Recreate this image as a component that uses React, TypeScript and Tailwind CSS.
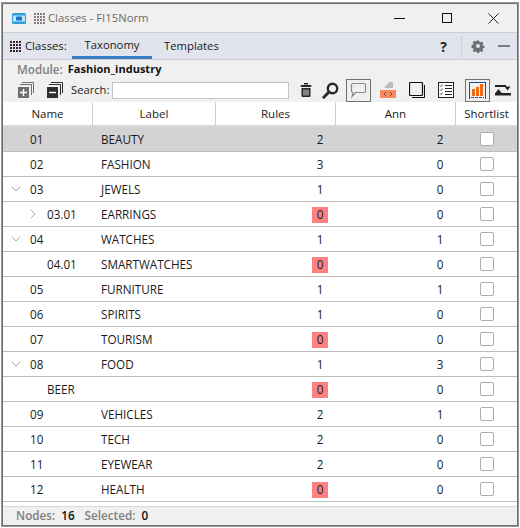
import { ChevronDown, ChevronRight } from "lucide-react";

type Row = {
    name: string;
    label: string;
    rules: number;
    ann: number;
    indent?: boolean;
    toggle?: "down" | "right";
    selected?: boolean;
};

const rows: Row[] = [
    { name: "01", label: "BEAUTY", rules: 2, ann: 2, selected: true },
    { name: "02", label: "FASHION", rules: 3, ann: 0 },
    { name: "03", label: "JEWELS", rules: 1, ann: 0, toggle: "down" },
    { name: "03.01", label: "EARRINGS", rules: 0, ann: 0, indent: true, toggle: "right" },
    { name: "04", label: "WATCHES", rules: 1, ann: 1, toggle: "down" },
    { name: "04.01", label: "SMARTWATCHES", rules: 0, ann: 0, indent: true },
    { name: "05", label: "FURNITURE", rules: 1, ann: 1 },
    { name: "06", label: "SPIRITS", rules: 1, ann: 0 },
    { name: "07", label: "TOURISM", rules: 0, ann: 0 },
    { name: "08", label: "FOOD", rules: 1, ann: 3, toggle: "down" },
    { name: "BEER", label: "", rules: 0, ann: 0, indent: true },
    { name: "09", label: "VEHICLES", rules: 2, ann: 1 },
    { name: "10", label: "TECH", rules: 2, ann: 0 },
    { name: "11", label: "EYEWEAR", rules: 2, ann: 0 },
    { name: "12", label: "HEALTH", rules: 0, ann: 0 },
];

function DotGrid({ color }: { color: string }) {
    const dots = [0, 1, 2, 3];
    return (
        <svg width="11" height="11" viewBox="0 0 11 11" fill={color} className="shrink-0">
            {dots.map((y) =>
                dots.map((x) => <rect key={`${x}-${y}`} x={x * 3} y={y * 3} width="2" height="2" />),
            )}
        </svg>
    );
}

function StackIcon({ dark, sign }: { dark: boolean; sign: "+" | "-" }) {
    const fill = dark ? "#2f2f2f" : "#6e6e6e";
    return (
        <svg width="16" height="16" viewBox="0 0 16 16" className="shrink-0">
            <path d="M4 .5h11.500V11M2 2.500h11.500V13" fill="none" stroke={fill} strokeWidth="1" />
            <rect x="0" y="5" width="11" height="11" fill={fill} />
            <path d={sign === "+" ? "M2 10.500h7M5.500 7v7" : "M2 10.500h7"} stroke="#fff" strokeWidth="1.400" />
        </svg>
    );
}

function Toolbar() {
    return (
        <div className="flex items-center h-[22px] ml-[1px]">
            <StackIcon dark={false} sign="+" />
            <span className="w-[13px]" />
            <StackIcon dark sign="-" />
            <span className="ml-[8px] w-[38px] text-[11.200px] text-[#222] whitespace-nowrap">Search:</span>
            <div className="ml-[3px] w-[177px] h-[17px] bg-white border border-[#c4c4c4] shrink-0" />
            <svg width="12" height="14" viewBox="0 0 12 14" className="ml-[11px] shrink-0" fill="#2a2a2a">
                <rect x="4" y="0" width="4" height="1.500" />
                <rect x="0.500" y="2" width="11" height="2" rx="1" />
                <path d="M1.500 5h9v8a1 1 0 0 1-1 1h-7a1 1 0 0 1-1-1z" />
                <path d="M4 6.500v6M6 6.500v6M8 6.500v6" stroke="#f0f0f0" strokeWidth="0.900" />
            </svg>
            <svg width="17" height="17" viewBox="0 0 17 17" className="ml-[10px] shrink-0" fill="none">
                <circle cx="10.500" cy="6.500" r="4.700" stroke="#2a2a2a" strokeWidth="2.400" />
                <path d="M7 10 1.800 15.200" stroke="#2a2a2a" strokeWidth="3" strokeLinecap="round" />
            </svg>
            <div className="ml-[7px] w-[25px] h-[23px] border border-[#707070] flex items-center justify-center shrink-0">
                <svg width="17" height="16" viewBox="0 0 17 16" fill="none">
                    <path d="M3 1.500h11a1.500 1.500 0 0 1 1.500 1.500v6a1.500 1.500 0 0 1-1.500 1.500H5.500L2 14.500l.8-4a1.500 1.500 0 0 1-1.300-1.500V3A1.500 1.500 0 0 1 3 1.500z" stroke="#8a8a8a" strokeWidth="1.200" />
                </svg>
            </div>
            <svg width="16" height="16" viewBox="0 0 16 16" className="ml-[9px] shrink-0">
                <path d="M4 6 9 0h4v6z" fill="#b9bcc0" />
                <rect x="0" y="8" width="16" height="8" fill="#f58b5c" />
                <path d="M6 10l-2 2 2 2M10 10l2 2-2 2" stroke="#6b3a20" strokeWidth="0.800" fill="none" />
            </svg>
            <svg width="16" height="16" viewBox="0 0 16 16" className="ml-[13px] shrink-0" fill="none" stroke="#111">
                <path d="M15.500 3v12.500H3" strokeWidth="1" />
                <rect x="0.500" y="0.500" width="13" height="13" rx="1" fill="#f0f0f0" strokeWidth="1.200" />
            </svg>
            <svg width="16" height="16" viewBox="0 0 16 16" className="ml-[13px] shrink-0" fill="none" stroke="#222">
                <rect x="0.500" y="0.500" width="15" height="15" strokeWidth="1" fill="#fff" />
                <path d="M7 3.500h7M7 6.500h7M7 9.500h7M7 12.500h7" strokeWidth="1" />
                <path d="M2 3.500l1 1 1.500-2M2 7.500l1 1 1.500-2M2 11.500l1 1 1.500-2" strokeWidth="0.800" />
            </svg>
            <div className="ml-[11px] w-[25px] h-[23px] border border-[#707070] flex items-center justify-center shrink-0">
                <svg width="17" height="17" viewBox="0 0 17 17" fill="none">
                    <path d="M.5 0v17M16.500 0v17M0 .5h17" stroke="#1f4f8f" strokeWidth="1" />
                    <rect x="3" y="7" width="3" height="7" fill="#ef6a10" />
                    <rect x="7" y="5" width="3" height="9" fill="#ef6a10" />
                    <rect x="11" y="2" width="3" height="12" fill="#ef6a10" />
                    <path d="M2 15.500h13" stroke="#1f4f8f" strokeWidth="1" strokeDasharray="3 1" />
                </svg>
            </div>
            <svg width="16" height="14" viewBox="0 0 16 14" className="ml-[5px] shrink-0" fill="#222">
                <rect x="0" y="2" width="11" height="2" />
                <path d="M9.500 3.500h6L12.500 7.500z" />
                <rect x="0" y="10" width="16" height="2.500" />
                <path d="M0 10.500 3.500 6 7 10.500z" />
            </svg>
        </div>
    );
}

function TableRow({ row }: { row: Row }) {
    const Toggle = row.toggle === "down" ? ChevronDown : ChevronRight;
    return (
        <div className={`flex items-center h-[25px] border-b border-[#bdbdbd] ${row.selected ? "bg-[#d3d3d3]" : "bg-white"}`}>
            <div className="relative w-[90px] h-full flex items-center shrink-0 pt-[1px]">
                {row.toggle && (
                    <Toggle
                        size={16}
                        strokeWidth={1.200}
                        color="#909090"
                        className={row.indent ? "absolute left-[22px] top-[4px]" : "absolute left-[5px] top-[4px]"}
                    />
                )}
                <span className={row.indent ? "pl-[44px]" : "pl-[27px]"}>{row.name}</span>
            </div>
            <div className="w-[123px] pl-[8px] pt-[2px] shrink-0">{row.label}</div>
            <div className="w-[120px] shrink-0 flex justify-end pr-[8px] pt-[2px]">
                <span className={row.rules === 0 ? "w-[16px] h-[16px] bg-[#ff8080] flex items-center justify-center" : "w-[16px] text-center"}>
                    {row.rules}
                </span>
            </div>
            <div className="w-[120px] shrink-0 flex justify-end pr-[8px] pt-[2px]">
                <span className="w-[16px] text-center">{row.ann}</span>
            </div>
            <div className="flex-1 flex justify-center">
                <div className="w-[14px] h-[14px] bg-white border border-[#adadad] rounded-[2px]" />
            </div>
        </div>
    );
}

export default function App() {
    return (
        <div className="w-[520px] h-[528px] bg-white pt-[3px] pl-[2px] pr-[2px] pb-[2px] font-['Open_Sans','Noto_Sans',sans-serif] text-[11.700px] text-[#1a1a1a]">
            <div className="h-full flex flex-col bg-[#f0f0f0] border border-[#6d6d6d] shadow-[0_0_0_1px_#9a9a9a]">
                {/* Title bar */}
                <div className="h-[29px] flex items-center shrink-0 border-b border-[#cfcfcf]">
                    <svg width="14" height="11" viewBox="0 0 14 11" className="ml-[9px] shrink-0">
                        <rect width="14" height="11" rx="1.500" fill="#2f9fdc" />
                        <rect x="1" y="2.500" width="12" height="6" fill="#bfe6fa" />
                        <rect x="4" y="3.500" width="6" height="4" rx="1" fill="#1473c4" />
                    </svg>
                    <span className="ml-[8px]"><DotGrid color="#8a7a7a" /></span>
                    <span className="ml-[3px] text-[11.300px] text-[#6c6c6c]">Classes - FI15Norm</span>
                    <div className="ml-auto flex items-center">
                        <div className="w-[47px] flex justify-center"><div className="w-[11px] h-px bg-[#111]" /></div>
                        <div className="w-[47px] flex justify-center"><div className="w-[10px] h-[10px] border border-[#111]" /></div>
                        <div className="w-[47px] flex justify-center">
                            <svg width="11" height="11" viewBox="0 0 11 11" stroke="#222" strokeWidth="1"><path d="M.5.500l10 10M10.500.500l-10 10" /></svg>
                        </div>
                    </div>
                </div>

                {/* Tabs */}
                <div className="h-[27px] flex items-stretch shrink-0 bg-[#e1e4ec] border-b border-[#cfcfcf]">
                    <div className="flex items-center ml-[7px] w-[62px] text-[11.300px]">
                        <DotGrid color="#40202f" />
                        <span className="ml-[4px] text-[#1a1a1a]">Classes:</span>
                    </div>
                    <div className="w-[80px] flex items-center justify-center border-b-[3px] border-[#3a7dc4] pt-[2px] text-[11.300px]">Taxonomy</div>
                    <div className="ml-[12px] flex items-center text-[11.300px]">Templates</div>
                    <div className="ml-auto flex items-center">
                        <span className="font-bold text-[14px] text-[#222] mr-[14px]">?</span>
                        <div className="w-px h-[21px] bg-[#cfd0d4] mr-[9px]" />
                        <svg width="14" height="14" viewBox="0 0 14 14" className="mr-[13px]">
                            <path d="M5.600 0h2.800l.4 2 1.200.5 1.700-1.100 2 2-1.100 1.700.5 1.200 2 .4v2.800l-2 .4-.5 1.200 1.100 1.700-2 2-1.700-1.100-1.200.5-.4 2H5.600l-.4-2-1.200-.5-1.700 1.100-2-2 1.100-1.700-.5-1.200-2-.4V5.600l2-.4.500-1.200L.3 2.300l2-2L4 1.400l1.200-.5z" transform="translate(1.400 1.400) scale(.8)" fill="#6f6f6f" />
                            <circle cx="7" cy="7" r="2" fill="#e1e4ec" />
                        </svg>
                        <div className="w-[12px] h-[2px] bg-[#7d7d7d] mr-[7px]" />
                    </div>
                </div>

                {/* Module and tools */}
                <div className="h-[42px] shrink-0 pl-[14px]">
                    <div className="h-[19px] flex items-center font-semibold">
                        <span className="text-[#7f7f7f]">Module:</span>
                        <span className="ml-[5px] text-[11px] font-bold text-[#111]">Fashion_industry</span>
                    </div>
                    <Toolbar />
                </div>

                {/* Table */}
                <div className="flex-1 flex flex-col bg-white">
                    <div className="h-[25px] flex items-center shrink-0 bg-white border-b-[2px] border-[#d8d8d8] text-[11.500px]">
                        <div className="w-[90px] h-full text-center leading-[23px] border-r border-[#d0d0d0]">Name</div>
                        <div className="w-[123px] h-full text-center leading-[23px] border-r border-[#d0d0d0]">Label</div>
                        <div className="w-[120px] h-full text-center leading-[23px] border-r border-[#d0d0d0]">Rules</div>
                        <div className="w-[120px] h-full text-center leading-[23px] border-r border-[#d0d0d0]">Ann</div>
                        <div className="flex-1 h-full text-center leading-[23px]">Shortlist</div>
                    </div>
                    {rows.map((row) => (
                        <TableRow key={row.name} row={row} />
                    ))}
                </div>

                {/* Footer */}
                <div className="h-[19px] shrink-0 flex items-center pl-[13px] font-semibold border-t border-[#d8d8d8]">
                    <span className="text-[#7f7f7f]">Nodes:</span>
                    <span className="ml-[6px] text-[#111]">16</span>
                    <span className="ml-[10px] text-[#7f7f7f]">Selected:</span>
                    <span className="ml-[6px] text-[#111]">0</span>
                </div>
            </div>
        </div>
    );
}
